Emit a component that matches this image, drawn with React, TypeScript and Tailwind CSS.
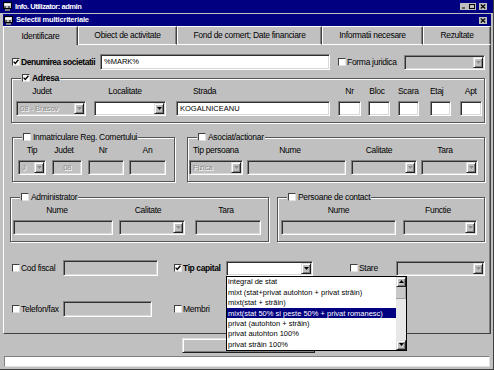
import type { ReactNode } from "react";

const sunken =
  "border border-t-[#808080] border-l-[#808080] border-b-white border-r-white shadow-[inset_1px_1px_0_#303030,inset_-1px_-1px_0_#d8d8d8]";
const raised =
  "border border-t-[#e0e0e0] border-l-[#e0e0e0] border-b-[#202020] border-r-[#202020] shadow-[inset_1px_1px_0_#fff,inset_-1px_-1px_0_#808080]";
const dimText = "text-[#8c8c8c] [text-shadow:1px_1px_0_#fff]";

function Check({ on }: { on?: boolean }) {
  return (
    <span className="flex h-[8px] w-[8px] shrink-0 items-center justify-center border border-t-[#404040] border-l-[#404040] border-b-[#e0e0e0] border-r-[#e0e0e0] bg-white">
      {on && (
        <svg width="6" height="6" viewBox="0 0 6 6">
          <path d="M0.6 2.6 2.3 4.5 5.4 0.8" fill="none" stroke="#000" strokeWidth="1.4" />
        </svg>
      )}
    </span>
  );
}

function Field({ className = "", white, text }: { className?: string; white?: boolean; text?: string }) {
  return (
    <div
      className={`flex h-[15px] items-center overflow-hidden whitespace-nowrap pl-[3px] text-[7.5px] tracking-normal ${sunken} ${
        white ? "bg-white" : "bg-[#c0c0c0]"
      } ${className}`}
    >
      {text}
    </div>
  );
}

function Arrow({ up, dim }: { up?: boolean; dim?: boolean }) {
  return (
    <svg width="5" height="3" viewBox="0 0 5 3">
      <path d={up ? "M0 3h5L2.5 0z" : "M0 0h5L2.5 3z"} fill={dim ? "#8c8c8c" : "#000"} />
    </svg>
  );
}

function Combo({
  className = "",
  white,
  text,
  children,
}: {
  className?: string;
  white?: boolean;
  text?: string;
  children?: ReactNode;
}) {
  return (
    <div className={`relative flex h-[15px] p-[1px] ${sunken} ${white ? "bg-white" : "bg-[#c0c0c0]"} ${className}`}>
      <span
        className={`flex flex-1 items-center overflow-hidden whitespace-nowrap pl-[2px] text-[7.5px] tracking-normal ${
          white ? "" : dimText
        }`}
      >
        {text}
      </span>
      <span className={`flex w-[10px] items-center justify-center bg-[#c0c0c0] ${raised}`}>
        <Arrow dim={!white} />
      </span>
      {children}
    </div>
  );
}

function Group({
  title,
  on,
  bold,
  className = "",
  children,
}: {
  title: string;
  on?: boolean;
  bold?: boolean;
  className?: string;
  children: ReactNode;
}) {
  return (
    <div className={`flex flex-col border border-[#555] pb-[6px] shadow-[inset_1px_1px_0_#fff,1px_1px_0_#fff] ${className}`}>
      <div className="-mt-[6px] ml-[9px] flex h-[10px] items-center gap-[2px] self-start bg-[#c0c0c0] px-[1px]">
        <Check on={on} />
        <span className={bold ? "font-bold" : ""}>{title}</span>
      </div>
      <div className="mt-[3px] flex">{children}</div>
    </div>
  );
}

function Col({ label, lc = "", className = "", children }: { label: string; lc?: string; className?: string; children: ReactNode }) {
  return (
    <div className={`flex flex-col ${className}`}>
      <span className={`h-[10px] whitespace-nowrap text-center leading-[10px] ${lc}`}>{label}</span>
      <div className="mt-[5px]">{children}</div>
    </div>
  );
}

function AppIcon() {
  return (
    <svg width="9" height="9" viewBox="0 0 9 9" className="shrink-0">
      <rect x="0.5" y="0.5" width="8" height="6" fill="#c0c0c0" stroke="#000" />
      <rect x="1.5" y="1.5" width="6" height="2" fill="#fff" />
      <rect x="2" y="7" width="5" height="2" fill="#808080" />
      <rect x="1" y="4.5" width="2" height="1" fill="#000" />
      <rect x="5" y="4.5" width="2" height="1" fill="#000" />
    </svg>
  );
}

function TitleBtn({ kind, className = "" }: { kind: "min" | "max" | "close"; className?: string }) {
  return (
    <span className={`flex h-[7px] w-[8px] items-center justify-center bg-[#c0c0c0] ${className}`}>
      <svg width="6" height="5" viewBox="0 0 6 5">
        {kind === "min" && <rect x="1" y="3.5" width="3" height="1" fill="#000" />}
        {kind === "max" && <rect x="0.5" y="0.5" width="5" height="4" fill="none" stroke="#000" />}
        {kind === "close" && <path d="M0.8 0.5 5.2 4.5M5.2 0.5 0.8 4.5" stroke="#000" strokeWidth="1.2" />}
      </svg>
    </span>
  );
}

const TABS = [
  { label: "Identificare", w: "w-[75px]", active: true },
  { label: "Obiect de activitate", w: "w-[99px]" },
  { label: "Fond de comert; Date financiare", w: "w-[145px]" },
  { label: "Informatii necesare", w: "w-[101px]" },
  { label: "Rezultate", w: "flex-1" },
];

const CAPITAL = [
  "integral de stat",
  "mixt (stat+privat autohton + privat străin)",
  "mixt(stat + străin)",
  "mixt(stat 50% si peste 50% + privat romanesc)",
  "privat (autohton + străin)",
  "privat autohton 100%",
  "privat străin 100%",
];

export default function App() {
  return (
    <div className="relative flex h-[370px] w-[494px] flex-col overflow-hidden border-r border-b border-[#404040] bg-[#c0c0c0] font-['Liberation_Sans',Arial,sans-serif] text-[8.5px] leading-none tracking-[-0.3px] text-black">
      {/* outer window title */}
      <div className="flex h-[13px] shrink-0 items-center bg-[#000080] pl-[3px] pr-[6px]">
        <AppIcon />
        <span className="ml-[3px] text-[7.5px] font-bold tracking-[-0.45px] text-white">Info. Utilizator: admin</span>
        <div className="ml-auto flex items-center">
          <TitleBtn kind="min" />
          <TitleBtn kind="max" />
          <TitleBtn kind="close" className="ml-[3px]" />
        </div>
      </div>

      <div className="ml-[3px] mt-[1px] flex w-[488px] flex-col">
        {/* inner window title */}
        <div className="flex h-[12px] items-center bg-[#000080] pl-[1px] pr-[4px]">
          <AppIcon />
          <span className="ml-[3px] text-[7.5px] font-bold tracking-[-0.2px] text-white">Selectii multicriteriale</span>
          <TitleBtn kind="close" className="ml-auto" />
        </div>

        {/* tabs */}
        <div className="flex h-[19px]">
          {TABS.map((t) => (
            <div
              key={t.label}
              className={`flex items-center justify-center whitespace-nowrap border-t border-l border-r border-t-white border-l-white border-r-[#404040] shadow-[inset_-1px_0_0_#808080] ${t.w} ${
                t.active ? "" : "border-b border-b-white"
              }`}
            >
              {t.label}
            </div>
          ))}
        </div>

        {/* panel */}
        <div className="flex h-[289px] flex-col border-l border-r border-b border-l-white border-r-[#404040] border-b-[#404040] shadow-[inset_-1px_0_0_#808080]">
          {/* denumire */}
          <div className="mt-[9px] flex h-[16px] items-center">
            <span className="ml-[8px]">
              <Check on />
            </span>
            <span className="ml-[1px] w-[79px] font-bold tracking-[-0.45px]">Denumirea societatii</span>
            <Field white text="%MARK%" className="h-[16px] w-[230px]" />
            <span className="ml-[8px]">
              <Check />
            </span>
            <span className="ml-[1px] w-[57px]">Forma juridica</span>
            <Combo className="w-[81px]" />
          </div>

          {/* adresa */}
          <Group title="Adresa" on bold className="ml-[7px] mt-[8px] w-[474px]">
            <Col label="Judet" lc="pr-[18px]" className="ml-[4px]">
              <Combo className="w-[70px]" text="08 - Brasov" />
            </Col>
            <Col label="Localitate" lc="pr-[10px]" className="ml-[8px]">
              <Combo white className="w-[72px]" />
            </Col>
            <Col label="Strada" lc="text-left pl-[17px]" className="ml-[10px]">
              <Field white text="KOGALNICEANU" className="w-[154px]" />
            </Col>
            <Col label="Nr" className="ml-[8px]">
              <Field white className="w-[23px]" />
            </Col>
            <Col label="Bloc" lc="pr-[4px]" className="ml-[7px]">
              <Field white className="w-[22px]" />
            </Col>
            <Col label="Scara" lc="pr-[3px]" className="ml-[8px]">
              <Field white className="w-[21px]" />
            </Col>
            <Col label="Etaj" lc="pr-[7px]" className="ml-[8px]">
              <Field white className="w-[21px]" />
            </Col>
            <Col label="Apt" className="ml-[9px]">
              <Field white className="w-[22px]" />
            </Col>
          </Group>

          {/* inmatriculare + asociat */}
          <div className="mt-[14px] flex">
            <Group title="Inmatriculare Reg. Comertului" className="ml-[8px] w-[163px]">
              <Col label="Tip" className="ml-[5px]">
                <Combo className="w-[28px]" text="J" />
              </Col>
              <Col label="Judet" lc="pr-[6px]" className="ml-[6px]">
                <div className={`flex h-[15px] w-[30px] items-center justify-center text-[7.5px] ${sunken} ${dimText}`}>08</div>
              </Col>
              <Col label="Nr" lc="pr-[6px]" className="ml-[6px]">
                <Field className="w-[36px]" />
              </Col>
              <Col label="An" className="ml-[5px]">
                <Field className="w-[37px]" />
              </Col>
            </Group>
            <Group title="Asociat/actionar" className="ml-[12px] w-[298px]">
              <Col label="Tip persoana" lc="text-left pl-[4px]" className="ml-[1px]">
                <Combo className="w-[54px]" text="Fizica" />
              </Col>
              <Col label="Nume" lc="pr-[13px]" className="ml-[4px]">
                <Field className="w-[99px]" />
              </Col>
              <Col label="Calitate" lc="pr-[10px]" className="ml-[5px]">
                <Combo className="w-[66px]" />
              </Col>
              <Col label="Tara" lc="pr-[9px]" className="ml-[4px]">
                <Combo className="w-[57px]" />
              </Col>
            </Group>
          </div>

          {/* administrator + persoane de contact */}
          <div className="mt-[15px] flex">
            <Group title="Administrator" className="ml-[6px] w-[259px]">
              <Col label="Nume" lc="pr-[12px]" className="ml-[2px]">
                <Field className="w-[100px]" />
              </Col>
              <Col label="Calitate" lc="pr-[8px]" className="ml-[6px]">
                <Combo className="w-[66px]" />
              </Col>
              <Col label="Tara" lc="pr-[4px]" className="ml-[10px]">
                <Field className="w-[66px]" />
              </Col>
            </Group>
            <Group title="Persoane de contact" className="ml-[8px] w-[208px]">
              <Col label="Nume" className="ml-[3px]">
                <Field className="w-[115px]" />
              </Col>
              <Col label="Functie" lc="pr-[4px]" className="ml-[7px]">
                <Combo className="w-[74px]" />
              </Col>
            </Group>
          </div>

          {/* cod fiscal / tip capital / stare */}
          <div className="relative z-10 mt-[18px] flex h-[16px] items-center">
            <span className="ml-[8px]">
              <Check />
            </span>
            <span className="ml-[1px] w-[42px]">Cod fiscal</span>
            <Field className="h-[16px] w-[95px]" />
            <span className="ml-[16px]">
              <Check on />
            </span>
            <span className="ml-[1px] w-[43px] font-bold tracking-[-0.4px]">Tip capital</span>
            <Combo white className="w-[87px]">
              <div className="absolute left-[-1px] top-[14px] flex h-[75px] w-[181px] border border-black bg-white">
                <div className="flex flex-1 flex-col pt-[0.5px]">
                  {CAPITAL.map((c, i) => (
                    <div
                      key={c}
                      className={`flex h-[10.5px] items-center whitespace-nowrap pl-[1px] text-[7.5px] tracking-normal ${
                        i === 3 ? "bg-[#000080] text-white" : ""
                      }`}
                    >
                      {c}
                    </div>
                  ))}
                </div>
                <div className="flex w-[10px] flex-col bg-[#e8e8e8]">
                  <span className={`flex h-[10px] items-center justify-center bg-[#c0c0c0] ${raised}`}>
                    <Arrow up />
                  </span>
                  <span className="h-[12px] bg-[#c8c8c8] shadow-[inset_-1px_-1px_0_#a0a0a0]" />
                  <span className="flex-1" />
                  <span className={`flex h-[10px] items-center justify-center bg-[#c0c0c0] ${raised}`}>
                    <Arrow />
                  </span>
                </div>
              </div>
            </Combo>
            <span className="ml-[37px]">
              <Check />
            </span>
            <span className="ml-[1px] w-[37px]">Stare</span>
            <Combo className="w-[89px]" />
          </div>

          {/* telefon / membri */}
          <div className="mt-[25px] flex h-[16px] items-center">
            <span className="ml-[8px]">
              <Check />
            </span>
            <span className="ml-[1px] w-[42px]">Telefon/fax</span>
            <Field className="h-[16px] w-[89px]" />
            <span className="ml-[22px]">
              <Check />
            </span>
            <span className="ml-[1px]">Membri</span>
          </div>
        </div>

        {/* button + status bar */}
        <div className={`ml-[179px] mt-[4px] h-[15px] w-[133px] bg-[#c0c0c0] ${raised}`} />
        <div className="ml-[1px] mt-[3px] h-[11px] w-[486px] border border-t-[#808080] border-l-[#808080] border-b-[#e0e0e0] border-r-[#e0e0e0] bg-white" />
      </div>
    </div>
  );
}
